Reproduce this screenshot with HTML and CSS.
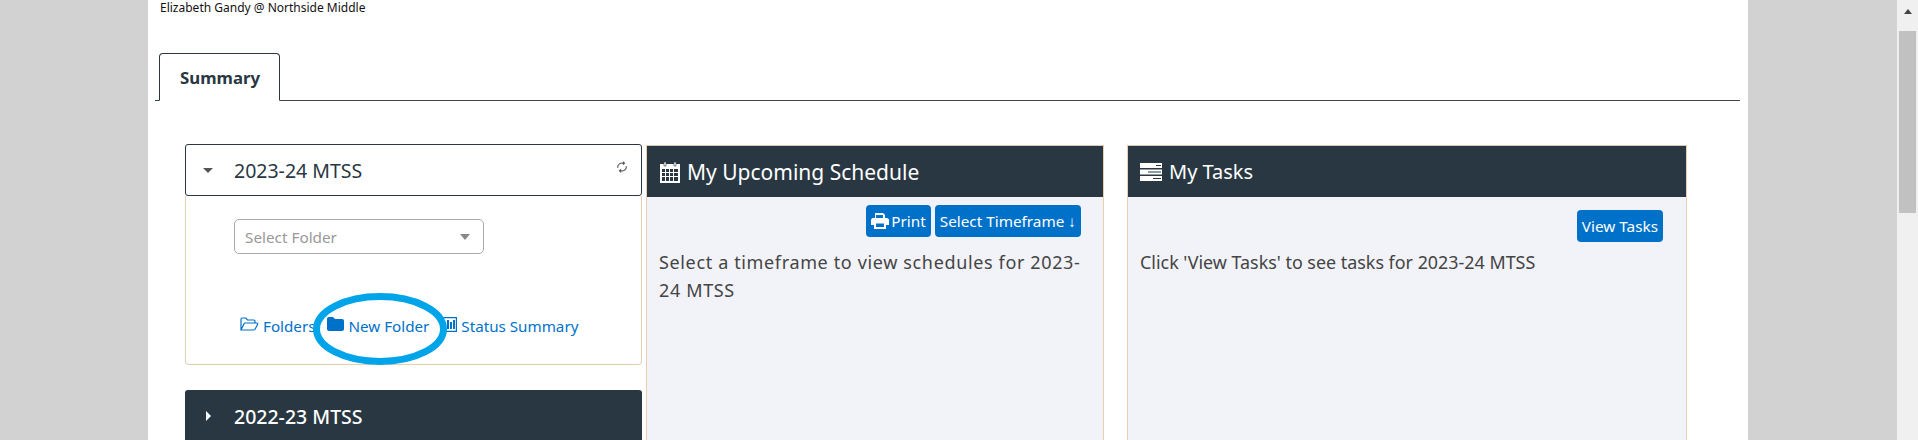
FILE: index.html
```html
<!DOCTYPE html>
<html lang="en">
<head>
  <meta charset="utf-8" />
  <title>Summary</title>
  <link rel="stylesheet" href="styles.css">
</head>
<body>

<div class="page">
  <div class="user">Elizabeth Gandy @ Northside Middle</div>

  <div class="tabs">
    <div class="tab">Summary</div>
  </div>

  <div class="columns">
    <div class="accordion">
      <div class="acc-head open">
        <span class="caret-down"></span>
        <span class="acc-title">2023-24 MTSS</span>
        <svg class="sync" viewBox="0 0 14 14"><path d="M2 8a5 5 0 0 1 7-5.2M12 6a5 5 0 0 1-7 5.2" fill="none" stroke="#555" stroke-width="1.3"/><path d="M8 0v5l3-2.5zM6 14V9l-3 2.5z" fill="#555"/></svg>
      </div>
      <div class="acc-body">
        <div class="select">
          <span>Select Folder</span>
          <span class="select-caret"></span>
        </div>
        <div class="links">
          <a class="link">
            <svg class="ico-open" viewBox="0 0 19 15"><path d="M1 13V2.2C1 1.500 1.500 1 2.200 1h3.600l1.700 2h6.300c.7 0 1.200.5 1.200 1.200V6M1 13l3-6.200c.2-.5.6-.8 1.200-.8h11.600c.7 0 1.100.6.800 1.200l-2.500 5c-.3.500-.7.800-1.300.8H1z" fill="none" stroke="#0071c9" stroke-width="1.200"/></svg>
            Folders
          </a>
          <a class="link">
            <svg class="ico-folder" viewBox="0 0 17 14"><path d="M0 2C0 .9.900 0 2 0h4l2 2h7c1.100 0 2 .9 2 2v8c0 1.100-.9 2-2 2H2c-1.100 0-2-.9-2-2z" fill="#0071c9"/></svg>
            New Folder
          </a>
          <a class="link">
            <svg class="ico-chart" viewBox="0 0 16 15"><path d="M.6.600h14.800v13.800H.6z" fill="none" stroke="#0071c9" stroke-width="1.200"/><path d="M3 7h2v5H3zM6 3h2v9H6zM9 5h2v7H9zM12 3h2v9h-2z" fill="#0071c9"/></svg>
            Status Summary
          </a>
          <svg class="circle" viewBox="0 0 134 72"><ellipse cx="67" cy="36" rx="63.500" ry="32.500" fill="none" stroke="#00a4e8" stroke-width="7"/></svg>
        </div>
      </div>
      <div class="acc-head closed">
        <span class="caret-right"></span>
        <span class="acc-title">2022-23 MTSS</span>
      </div>
    </div>

    <div class="panel schedule">
      <div class="panel-head">
        <svg class="ico-cal" viewBox="0 0 22 22"><path d="M1 3h20v19H1z" fill="#fff"/><path d="M5 1h2v4H5zM15 1h2v4h-2z" fill="#fff" stroke="#283742" stroke-width=".6"/><path d="M3 8h3v3H3zM7 8h3v3H7zM11 8h3v3h-3zM15 8h4v3h-4zM3 12h3v3H3zM7 12h3v3H7zM11 12h3v3h-3zM15 12h4v3h-4zM3 16h3v4H3zM7 16h3v4H7zM11 16h3v4h-3zM15 16h4v4h-4z" fill="#283742"/></svg>
        My Upcoming Schedule
      </div>
      <div class="panel-body">
        <div class="buttons">
          <a class="btn">
            <svg class="ico-print" viewBox="0 0 18 16"><path d="M4 0h8l2 2v4H4z" fill="#fff"/><path d="M2 5h14c1 0 2 1 2 2v5h-3v4H3v-4H0V7c0-1 1-2 2-2z" fill="#fff"/><path d="M5 10.500h8V14H5zM5 2h7v3H5z" fill="#0071c9"/></svg>
            Print
          </a>
          <a class="btn">Select Timeframe &#8595;</a>
        </div>
        <p>Select a timeframe to view schedules for 2023-24 MTSS</p>
      </div>
    </div>

    <div class="panel tasks">
      <div class="panel-head">
        <svg class="ico-tasks" viewBox="0 0 22 18"><path d="M0 0h22v5H0zM0 6.500h22v5H0zM0 13h22v5H0z" fill="#fff"/><path d="M16 2h5v1h-5zM8 8.500h13v1H8zM13 15h8v1h-8z" fill="#283742"/></svg>
        My Tasks
      </div>
      <div class="panel-body">
        <div class="buttons view">
          <a class="btn">View Tasks</a>
        </div>
        <p>Click 'View Tasks' to see tasks for 2023-24 MTSS</p>
      </div>
    </div>
  </div>
</div>

<div class="scrollbar">
  <span class="arrow"></span>
  <div class="thumb"></div>
</div>

</body>
</html>
```

FILE: styles.css
```css
html, body {
    margin: 0;
    height: 440px;
    overflow: hidden;
}
body {
    display: flex;
    background: #d2d2d2;
    font-family: "Noto Sans", sans-serif;
    color: #444;
}
.page {
    width: 1600px;
    margin-left: 148px;
    background: #fff;
}
.user {
    padding: 0 0 0 12px;
    height: 15px;
    font-size: 12px;
    line-height: 15px;
    color: #111;
}

/* tabs */
.tabs {
    margin: 38px 0 0 7px;
    width: 1585px;
    height: 48px;
    padding-left: 4px;
    box-sizing: border-box;
    border-bottom: 1px solid #444;
}
.tab {
    width: 121px;
    height: 48px;
    box-sizing: border-box;
    border: 1px solid #283742;
    border-bottom: 1px solid #fff;
    border-radius: 4px 4px 0 0;
    background: #fff;
    padding-left: 20px;
    font-size: 16.800px;
    font-weight: 700;
    line-height: 47px;
    color: #283742;
}

/* columns */
.columns {
    display: flex;
    align-items: flex-start;
    margin: 43px 0 0 37px;
}
.accordion {
    width: 457px;
}
.acc-head {
    display: flex;
    align-items: center;
    height: 52px;
    box-sizing: border-box;
    border-radius: 3px;
    font-size: 19.500px;
}
.acc-head.open {
    border: 1px solid #283742;
    background: #fff;
    color: #283742;
}
.acc-head.closed {
    margin-top: 25px;
    background: #283742;
    color: #fff;
    font-weight: 500;
}
.caret-down {
    width: 0;
    height: 0;
    margin: 0 21px 0 17px;
    border-left: 5px solid transparent;
    border-right: 5px solid transparent;
    border-top: 5px solid #555;
}
.caret-right {
    width: 0;
    height: 0;
    margin: 0 23px 0 21px;
    border-top: 5px solid transparent;
    border-bottom: 5px solid transparent;
    border-left: 5px solid #fff;
}
.sync {
    width: 12px;
    height: 14px;
    margin: -6px 13px 0 auto;
}
.acc-body {
    height: 169px;
    box-sizing: border-box;
    border: 1px solid #e8cfb2;
    border-top: 0;
    border-radius: 0 0 4px 4px;
    padding: 23px 0 0 48px;
}
.select {
    display: flex;
    align-items: center;
    justify-content: space-between;
    width: 250px;
    height: 35px;
    box-sizing: border-box;
    border: 1px solid #aaa;
    border-radius: 5px;
    padding: 0 13px 0 10px;
    font-size: 15.300px;
    color: #999;
}
.select-caret {
    width: 0;
    height: 0;
    border-left: 5px solid transparent;
    border-right: 5px solid transparent;
    border-top: 6px solid #888;
}
.links {
    position: relative;
    display: flex;
    align-items: center;
    margin: 62px 0 0 6px;
    font-size: 15.200px;
    line-height: 20px;
}
.link {
    display: flex;
    align-items: center;
    gap: 4px;
    color: #0071c9;
    white-space: nowrap;
}
.link + .link {
    margin-left: 12px;
}
.ico-open {
    width: 19px;
    height: 15px;
    margin-top: -4px;
}
.ico-folder {
    width: 17px;
    height: 14px;
    margin-top: -4px;
}
.ico-chart {
    width: 16px;
    height: 15px;
    margin-top: -3px;
}
.circle {
    position: absolute;
    left: 73px;
    top: -23px;
    width: 134px;
    height: 72px;
}

/* panels */
.panel {
    border: 1px solid #e8cfb2;
    border-top-color: #d8c8b4;
    background: #f2f3f8;
    box-sizing: border-box;
    height: 296px;
    margin-top: 1px;
}
.schedule {
    width: 458px;
    margin-left: 4px;
}
.tasks {
    width: 560px;
    margin-left: 23px;
}
.panel-head {
    display: flex;
    align-items: center;
    gap: 6px;
    height: 51px;
    padding-left: 12px;
    background: #283742;
    color: #fff;
    font-size: 21px;
}
.tasks .panel-head {
    gap: 7px;
    font-size: 20px;
}
.ico-cal {
    width: 22px;
    height: 22px;
}
.ico-tasks {
    width: 22px;
    height: 18px;
}
.panel-body {
    padding: 0 12px;
}
.buttons {
    display: flex;
    justify-content: flex-end;
    gap: 4px;
    padding: 8px 10px 0 0;
}
.buttons.view {
    padding: 13px 11px 0 0;
}
.btn {
    display: flex;
    align-items: center;
    gap: 2px;
    height: 32px;
    padding: 0 5px;
    border-radius: 4px;
    background: #0071c9;
    color: #fff;
    font-size: 15.300px;
}
.ico-print {
    width: 18px;
    height: 16px;
}
.panel-body p {
    margin: 11px 0 0;
    font-size: 18px;
    line-height: 28px;
    letter-spacing: .64px;
}
.tasks .panel-body p {
    margin-top: 6px;
    font-size: 17.900px;
    letter-spacing: 0;
}

/* scrollbar */
.scrollbar {
    position: relative;
    display: flex;
    flex-direction: column;
    align-items: center;
    width: 21px;
    margin-left: auto;
    background: #f0f0f0;
}
.arrow {
    width: 0;
    height: 0;
    margin-top: 9px;
    border-left: 4.500px solid transparent;
    border-right: 4.500px solid transparent;
    border-bottom: 5px solid #444;
}
.thumb {
    width: 17px;
    height: 182px;
    margin-top: 17px;
    background: #c1c1c1;
}
```
